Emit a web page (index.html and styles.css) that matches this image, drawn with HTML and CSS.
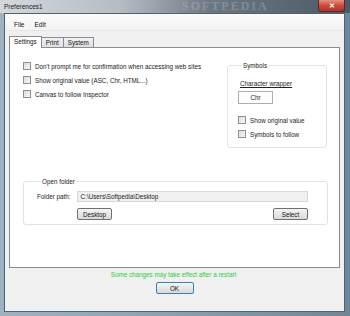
FILE: index.html
```html
<!DOCTYPE html>
<html lang="en">
<head>
  <meta charset="UTF-8" />
  <title>Preferences1</title>
  <link rel="stylesheet" href="styles.css">
</head>
<body>
  <div class="window">
    <div class="titlebar">
      <span class="title">Preferences1</span>
      <span class="watermark">SOFTPEDIA</span>
      <button class="close">&#x2715;</button>
    </div>
    <div class="client">
      <div class="menubar">
        <span class="menu-item">File</span>
        <span class="menu-item">Edit</span>
      </div>
      <div class="tabs">
        <span class="tab active">Settings</span>
        <span class="tab">Print</span>
        <span class="tab">System</span>
      </div>
      <div class="panel">
        <div class="top-row">
          <div class="options">
            <label class="check"><span class="box"></span>Don't prompt me for confirmation when accessing web sites</label>
            <label class="check"><span class="box"></span>Show original value (ASC, Chr, HTML...)</label>
            <label class="check"><span class="box"></span>Canvas to follow Inspector</label>
          </div>
          <fieldset class="group symbols">
            <legend>Symbols</legend>
            <div class="link">Character wrapper</div>
            <div class="textbox small">Chr</div>
            <div class="sym-checks">
              <label class="check"><span class="box"></span>Show original value</label>
              <label class="check"><span class="box"></span>Symbols to follow</label>
            </div>
          </fieldset>
        </div>
        <fieldset class="group folder">
          <legend>Open folder</legend>
          <div class="path-row">
            <span class="path-label">Folder path:</span>
            <div class="textbox path">C:\Users\Softpedia\Desktop</div>
          </div>
          <div class="button-row">
            <button class="btn">Desktop</button>
            <button class="btn">Select</button>
          </div>
        </fieldset>
      </div>
      <div class="footer">
        <div class="note">Some changes may take effect after a restart</div>
        <button class="btn ok">OK</button>
      </div>
    </div>
  </div>
</body>
</html>
```

FILE: styles.css
```css
* {
  box-sizing: border-box;
  font-family: 'Liberation Sans', Arial, sans-serif;
}

body {
  margin: 0;
  width: 350px;
  height: 316px;
  overflow: hidden;
}

.window {
  width: 350px;
  height: 316px;
  display: flex;
  flex-direction: column;
  background: linear-gradient(90deg, #9fb2c2, #8aa0b2 50%, #6f8598);
}

.titlebar {
  height: 13px;
  display: flex;
  align-items: center;
  padding-left: 4px;
  background: linear-gradient(90deg, #d3d8dc 0%, #b3bcc3 35%, #6c7882 60%, #4c5a66 100%);
  position: relative;
}

.title {
  font-size: 6.5px;
  color: #1a1a1a;
}

.watermark {
  position: absolute;
  left: 182px;
  top: 0;
  font-family: 'Liberation Serif', serif;
  font-size: 12px;
  line-height: 13px;
  font-weight: bold;
  letter-spacing: 2px;
  color: rgba(200, 210, 220, 0.3);
}

.close {
  margin-left: auto;
  margin-right: 5px;
  width: 27px;
  height: 12px;
  align-self: flex-start;
  padding: 0;
  border: 1px solid #5a2a2a;
  border-top: none;
  border-radius: 0 0 3px 3px;
  background: linear-gradient(#e59080, #cc4a3a 50%, #b03428);
  color: #fff;
  font-size: 7px;
  font-weight: bold;
  line-height: 10px;
}

.client {
  flex: 1;
  margin: 0 5px 4px 4px;
  border: 1px solid #4f6272;
  background: #f0f0f0;
  display: flex;
  flex-direction: column;
}

.menubar {
  height: 17px;
  display: flex;
  align-items: flex-end;
  gap: 10px;
  padding: 0 0 2px 9px;
  background: linear-gradient(#fbfbfb, #f3f3f3);
  border-bottom: 1px solid #e6e6e6;
}

.menu-item {
  font-size: 6.5px;
  color: #111;
}

.tabs {
  display: flex;
  align-items: flex-end;
  padding: 5px 0 0 6px;
  height: 16px;
}

.tab {
  height: 10px;
  padding: 0 4px;
  font-size: 6.3px;
  line-height: 9px;
  color: #111;
  border: 1px solid #898c95;
  border-bottom: none;
  background: linear-gradient(#f2f2f2, #dedede);
  margin-left: -1px;
}

.tab.active {
  height: 12px;
  padding: 0 4px;
  margin-left: -2px;
  background: #fff;
  position: relative;
  z-index: 1;
  margin-bottom: -1px;
  line-height: 10px;
}

.panel {
  height: 221px;
  margin: 0 4px;
  background: #fff;
  border: 1px solid #898c95;
  padding: 13px 12px 0 13px;
}

.top-row {
  display: flex;
  justify-content: space-between;
  align-items: flex-start;
}

.options {
  display: flex;
  flex-direction: column;
  gap: 6px;
  padding-top: 1px;
}

.check {
  display: flex;
  align-items: center;
  gap: 4px;
  font-size: 6.3px;
  color: #222;
  white-space: nowrap;
  height: 8px;
}

.box {
  width: 8px;
  height: 8px;
  border: 1px solid #8f8f8f;
  background: linear-gradient(135deg, #dcdcdc, #f6f6f6);
  flex: none;
}

.group {
  margin: 0;
  border: 1px solid #dde3e8;
  border-radius: 3px;
  padding: 0;
}

.group legend {
  font-size: 6.3px;
  color: #222;
  padding: 0 1px;
  margin-left: 4px;
}

.symbols {
  width: 100px;
  height: 86px;
  margin-top: 1px;
  padding: 11px 0 0 10px;
}

.link {
  font-size: 6.3px;
  color: #222;
  text-decoration: underline;
  margin-left: 2px;
}

.textbox {
  font-size: 6.3px;
  color: #222;
  border: 1px solid #abadb3;
  background: #fff;
  display: flex;
  align-items: center;
}

.textbox.small {
  width: 35px;
  height: 13px;
  justify-content: center;
  margin-top: 4px;
}

.sym-checks {
  display: flex;
  flex-direction: column;
  gap: 6px;
  margin-top: 12px;
}

.folder {
  margin-top: 30px;
  width: 305px;
  height: 47px;
  padding: 6px 19px 0 13px;
}

.path-row {
  display: flex;
  align-items: center;
  gap: 6px;
}

.path-label {
  font-size: 6.3px;
  color: #222;
}

.textbox.path {
  flex: 1;
  height: 11px;
  padding-left: 3px;
  background: #f0f0f0;
  border-color: #d8d8d8;
}

.button-row {
  display: flex;
  justify-content: space-between;
  margin: 6px 0 0 40px;
}

.btn {
  height: 12px;
  width: 35px;
  padding: 0;
  font-size: 6.3px;
  color: #111;
  border: 1px solid #707070;
  border-radius: 2px;
  background: linear-gradient(#f4f4f4, #e8e8e8 50%, #d8d8d8);
}

.footer {
  display: flex;
  flex-direction: column;
  align-items: center;
  padding-top: 3px;
}

.note {
  font-size: 6.3px;
  color: #2ecc40;
  margin-left: -2px;
}

.btn.ok {
  width: 38px;
  margin-top: 4px;
  height: 12px;
  border-color: #3c7fb1;
}
```
